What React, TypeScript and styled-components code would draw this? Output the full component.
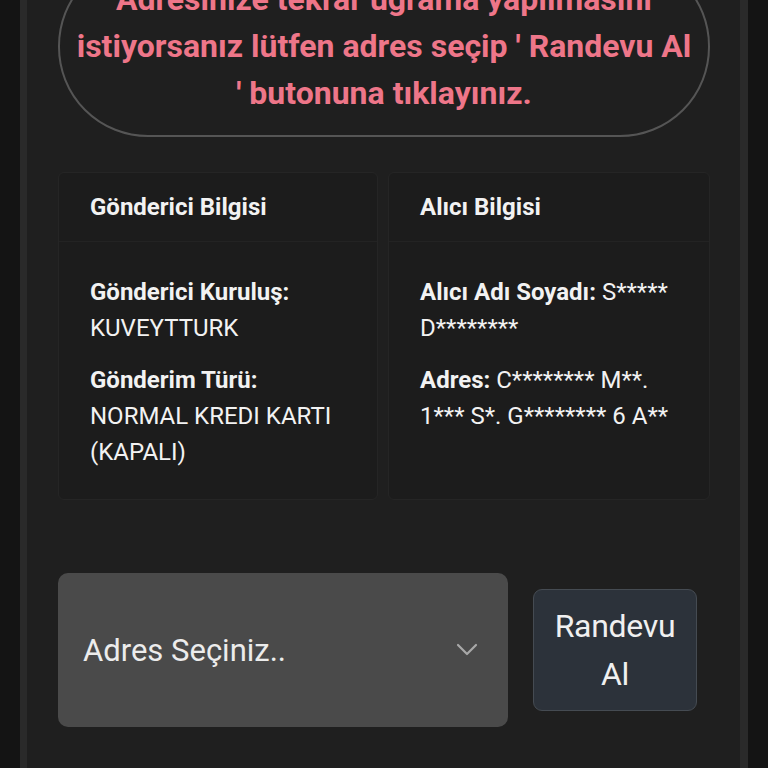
import styled, { createGlobalStyle } from 'styled-components';

const GlobalStyle = createGlobalStyle`
    html, body {
        margin: 0;
        padding: 0;
        background: #141414;
        font-family: Roboto, "Noto Sans", "Liberation Sans", sans-serif;
        overflow: hidden;
    }
`;

const Screen = styled.div`
    width: 768px;
    height: 768px;
    display: flex;
    overflow: hidden;
    background: #141414;
`;

const Frame = styled.div`
    margin-left: 20px;
    width: 728px;
    height: 100%;
    border-left: 7px solid #2a2a2a;
    border-right: 8px solid #2a2a2a;
    background: #1f1f1f;
    box-sizing: border-box;
    padding: 0 30px 0 31px;
`;

const Notice = styled.div`
    margin-top: -44px;
    border: 2px solid #555555;
    border-radius: 90px;
    padding: 18px 14px;
    text-align: center;
    color: #ee7689;
    font-weight: 700;
    font-size: 32px;
    line-height: 47px;
`;

const Cards = styled.div`
    display: grid;
    grid-template-columns: 320px 1fr;
    gap: 10px;
    margin-top: 35px;
    height: 328px;
`;

const Card = styled.section`
    background: #1c1c1c;
    border: 1px solid #252525;
    border-radius: 6px;
    display: flex;
    flex-direction: column;
    color: #f2f2f2;
`;

const CardHeader = styled.div`
    height: 68px;
    display: flex;
    align-items: center;
    padding: 0 31px;
    border-bottom: 1px solid #232323;
    font-size: 24px;
    font-weight: 700;
`;

const CardBody = styled.div`
    padding: 32px 31px 0;
    display: flex;
    flex-direction: column;
    gap: 16px;
`;

const Field = styled.p`
    margin: 0;
    font-size: 24px;
    line-height: 36px;

    b {
        font-weight: 700;
    }
`;

const Actions = styled.div`
    display: flex;
    align-items: center;
    gap: 25px;
    margin-top: 73px;
`;

const Select = styled.div`
    width: 450px;
    height: 154px;
    box-sizing: border-box;
    background: #4a4a4a;
    border-radius: 10px;
    padding: 0 30px 0 25px;
    display: flex;
    align-items: center;
    justify-content: space-between;
    color: #ececec;
    font-size: 31px;
`;

const Chevron = styled.svg`
    width: 22px;
    height: 14px;
    color: #a8a8a8;
`;

const Button = styled.button`
    width: 164px;
    height: 122px;
    background: #2c323a;
    border: 1px solid #454b52;
    border-radius: 9px;
    color: #f0f0f0;
    font-family: inherit;
    font-size: 32px;
    letter-spacing: -0.3px;
    line-height: 48px;
    padding: 0 16px;
`;

export default function App() {
    return (
        <Screen>
            <GlobalStyle />
            <Frame>
                <Notice>
                    Adresinize tekrar uğrama yapılmasını istiyorsanız lütfen adres seçip ' Randevu Al
                    ' butonuna tıklayınız.
                </Notice>
                <Cards>
                    <Card>
                        <CardHeader>Gönderici Bilgisi</CardHeader>
                        <CardBody>
                            <Field>
                                <b>Gönderici Kuruluş:</b>
                                <br />
                                KUVEYTTURK
                            </Field>
                            <Field>
                                <b>Gönderim Türü:</b>
                                <br />
                                NORMAL KREDI KARTI (KAPALI)
                            </Field>
                        </CardBody>
                    </Card>
                    <Card>
                        <CardHeader>Alıcı Bilgisi</CardHeader>
                        <CardBody>
                            <Field>
                                <b>Alıcı Adı Soyadı:</b> S***** D********
                            </Field>
                            <Field>
                                <b>Adres:</b> C******** M**. 1*** S*. G******** 6 A**
                            </Field>
                        </CardBody>
                    </Card>
                </Cards>
                <Actions>
                    <Select>
                        <span>Adres Seçiniz..</span>
                        <Chevron viewBox="0 0 22 14" fill="none">
                            <path d="M2 2l9 9 9-9" stroke="currentColor" strokeWidth="2.2" strokeLinecap="round" strokeLinejoin="round" />
                        </Chevron>
                    </Select>
                    <Button>Randevu Al</Button>
                </Actions>
            </Frame>
        </Screen>
    );
}
